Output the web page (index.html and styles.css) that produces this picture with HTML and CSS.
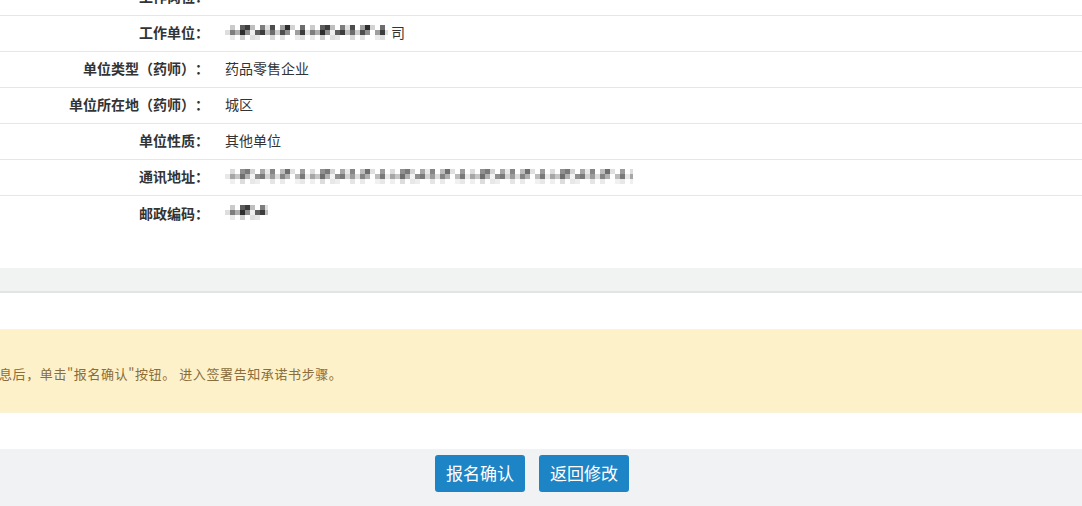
FILE: index.html
```html
<!DOCTYPE html>
<html lang="zh-CN">
<head>
    <meta charset="UTF-8">
    <meta name="viewport" content="width=device-width, initial-scale=1.0">
    <title>报名信息确认</title>
    <link rel="stylesheet" href="styles.css">
</head>
<body>
    <svg class="defs" width="0" height="0">
        <defs>
            <pattern id="mosaic" width="80" height="15" patternUnits="userSpaceOnUse">
                <rect x="0" y="0" width="80" height="15" fill="#fff"/>
                <!-- top row -->
                <rect x="5" y="0" width="5" height="5" fill="#c8c8c8"/>
                <rect x="15" y="0" width="5" height="5" fill="#555"/>
                <rect x="20" y="0" width="5" height="5" fill="#333"/>
                <rect x="25" y="0" width="5" height="5" fill="#bbb"/>
                <rect x="35" y="0" width="5" height="5" fill="#777"/>
                <rect x="40" y="0" width="5" height="5" fill="#e0e0e0"/>
                <rect x="45" y="0" width="5" height="5" fill="#444"/>
                <rect x="55" y="0" width="5" height="5" fill="#999"/>
                <rect x="60" y="0" width="5" height="5" fill="#222"/>
                <rect x="65" y="0" width="5" height="5" fill="#d0d0d0"/>
                <rect x="75" y="0" width="5" height="5" fill="#666"/>
                <!-- middle row -->
                <rect x="0" y="5" width="5" height="5" fill="#ddd"/>
                <rect x="5" y="5" width="5" height="5" fill="#777"/>
                <rect x="10" y="5" width="5" height="5" fill="#aaa"/>
                <rect x="15" y="5" width="5" height="5" fill="#222"/>
                <rect x="20" y="5" width="5" height="5" fill="#888"/>
                <rect x="25" y="5" width="5" height="5" fill="#eee"/>
                <rect x="30" y="5" width="5" height="5" fill="#555"/>
                <rect x="35" y="5" width="5" height="5" fill="#333"/>
                <rect x="40" y="5" width="5" height="5" fill="#bbb"/>
                <rect x="45" y="5" width="5" height="5" fill="#666"/>
                <rect x="50" y="5" width="5" height="5" fill="#ccc"/>
                <rect x="55" y="5" width="5" height="5" fill="#444"/>
                <rect x="60" y="5" width="5" height="5" fill="#888"/>
                <rect x="70" y="5" width="5" height="5" fill="#999"/>
                <rect x="75" y="5" width="5" height="5" fill="#333"/>
                <!-- bottom row -->
                <rect x="5" y="10" width="5" height="5" fill="#e8e8e8"/>
                <rect x="15" y="10" width="5" height="5" fill="#ccc"/>
                <rect x="25" y="10" width="5" height="5" fill="#ddd"/>
                <rect x="30" y="10" width="5" height="5" fill="#e5e5e5"/>
                <rect x="45" y="10" width="5" height="5" fill="#d8d8d8"/>
                <rect x="55" y="10" width="5" height="5" fill="#e0e0e0"/>
                <rect x="70" y="10" width="5" height="5" fill="#eaeaea"/>
                <rect x="75" y="10" width="5" height="5" fill="#ddd"/>
            </pattern>
        </defs>
    </svg>

    <div class="info">
        <div class="row">
            <div class="label">工作岗位：</div>
            <div class="value"></div>
        </div>
        <div class="row">
            <div class="label">工作单位：</div>
            <div class="value">
                <svg class="mosaic" width="163" height="15"><rect width="163" height="15" fill="url(#mosaic)"/></svg>司
            </div>
        </div>
        <div class="row">
            <div class="label">单位类型（药师）：</div>
            <div class="value">药品零售企业</div>
        </div>
        <div class="row">
            <div class="label">单位所在地（药师）：</div>
            <div class="value">城区</div>
        </div>
        <div class="row">
            <div class="label">单位性质：</div>
            <div class="value">其他单位</div>
        </div>
        <div class="row">
            <div class="label">通讯地址：</div>
            <div class="value">
                <svg class="mosaic light" width="408" height="15"><rect width="408" height="15" fill="url(#mosaic)"/></svg>
            </div>
        </div>
        <div class="row last">
            <div class="label">邮政编码：</div>
            <div class="value">
                <svg class="mosaic" width="43" height="15"><rect width="43" height="15" fill="url(#mosaic)"/></svg>
            </div>
        </div>
    </div>

    <div class="band"></div>

    <div class="notice">
        <div class="alert">息后，单击"报名确认"按钮。 进入签署告知承诺书步骤。</div>
    </div>

    <div class="footer">
        <button class="btn">报名确认</button>
        <button class="btn">返回修改</button>
    </div>
</body>
</html>
```

FILE: styles.css
```css
body { margin: 0; overflow: hidden; background: #fff; color: #333; font-family: "Noto Sans CJK SC", "Microsoft YaHei", sans-serif; font-size: 14px; text-spacing-trim: space-all; }
.defs { display: block; width: 0; height: 0; }

.info { margin-top: -20px; padding-bottom: 36px; }
.row { display: flex; align-items: center; height: 32px; padding-bottom: 3px; border-bottom: 1px solid #e6e6e6; }
.row.last { border-bottom: none; height: 33px; }
.label { width: 209px; text-align: right; font-weight: bold; white-space: nowrap; }
.value { padding-left: 16px; display: flex; align-items: center; gap: 3px; }
.mosaic { display: block; opacity: 0.95; }
.mosaic.light { opacity: 0.65; }

.band { height: 23px; background: #f1f2f2; border-bottom: 2px solid #e2e3e3; }

.notice { padding: 36px 0; }
.alert { background: #fdf1c9; border-top: 1px solid #fbf3d6; border-bottom: 1px solid #fbf3d6; color: #8a6d3b; font-size: 13px; letter-spacing: 0.6px; line-height: 20px; padding: 34px 0 28px 0; text-indent: -1px; white-space: nowrap; }

.footer { background: #f1f2f3; height: 58px; padding: 6px 18px 0 0; display: flex; justify-content: center; gap: 14px; }
.btn { width: 90px; height: 37px; background: #1d84c6; color: #fff; border: none; border-radius: 3px; font-family: inherit; font-size: 17px; cursor: pointer; padding: 0 0 2px 0; }
.btn:hover { background: #1a76b2; }
```
